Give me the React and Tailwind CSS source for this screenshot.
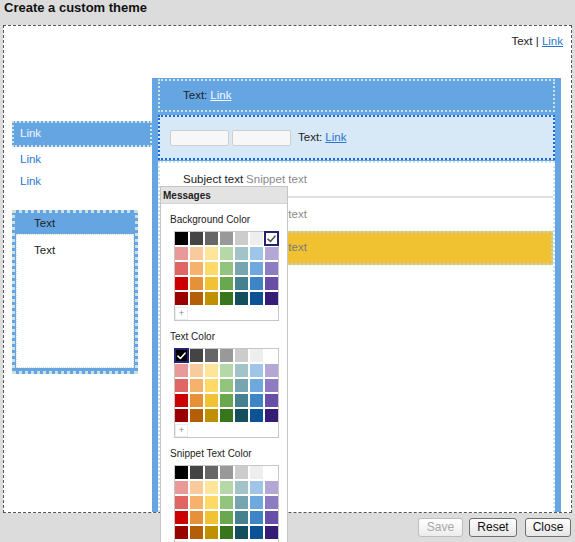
import React from "react";

const PALETTE = [
  ["#000000", "#444444", "#666666", "#999999", "#cccccc", "#eeeeee", "#ffffff"],
  ["#ea9999", "#f9cb9c", "#ffe599", "#b6d7a8", "#a2c4c9", "#9fc5e8", "#b4a7d6"],
  ["#e06666", "#f6b26b", "#ffd966", "#93c47d", "#76a5af", "#6fa8dc", "#8e7cc3"],
  ["#cc0000", "#e69138", "#f1c232", "#6aa84f", "#45818e", "#3d85c6", "#674ea7"],
  ["#990000", "#b45f06", "#bf9000", "#38761d", "#134f5c", "#0b5394", "#351c75"],
];

function Check({ light }) {
  return (
    <svg width="9" height="8" viewBox="0 0 9 8" className="block">
      <path
        d="M1 4.2 L3.4 6.5 L8 1.2"
        fill="none"
        stroke={light ? "#ffffff" : "#555555"}
        strokeWidth="1.6"
        strokeLinecap="round"
        strokeLinejoin="round"
      />
    </svg>
  );
}

function Swatches({ selected }) {
  return (
    <div className="ml-[4px] mt-[5px] w-[105px] border border-[#c6c6c6] bg-white">
      <div className="grid grid-cols-[repeat(7,13px)] gap-[2px]">
        {PALETTE.flat().map((c, i) => (
          <div key={i} className="relative h-[13px] w-[13px]" style={{ backgroundColor: c }}>
            {i === selected && (
              <div className="absolute -inset-[1px] flex items-center justify-center border-2 border-[#22226e]">
                <Check light={i === 0} />
              </div>
            )}
          </div>
        ))}
      </div>
      <div className="mt-[2px] flex h-[13px] w-[13px] items-center justify-center border border-[#ececec] text-[9px] leading-none text-[#888]">
        +
      </div>
    </div>
  );
}

function Section({ label, selected, first }) {
  return (
    <div className={first ? "" : "mt-[10px]"}>
      <div className="text-[10px] leading-[12px] text-[#222]">{label}</div>
      <Swatches selected={selected} />
    </div>
  );
}

export default function App() {
  return (
    <div className="relative h-[542px] w-[575px] overflow-hidden bg-[#dcdcdc] font-['Liberation_Sans',Arial,sans-serif] text-[#222]">
      <div className="h-[25px] pl-[4px] text-[13px] font-bold leading-[15px] text-[#111]">
        Create a custom theme
      </div>

      <div className="mx-[3px] flex h-[488px] flex-col overflow-hidden border border-dashed border-[#555] bg-white">
        <div className="pr-[8px] pt-[8px] text-right text-[11.5px] leading-[14px]">
          Text | <span className="text-[#2a76d2] underline">Link</span>
        </div>

        <div className="mt-[30px] flex min-h-0 flex-1 items-start">
          {/* left nav */}
          <div className="ml-[8px] mt-[43px] flex w-[140px] flex-col text-[11.5px]">
            <div className="flex h-[26px] items-center border-2 border-dotted border-[#d0e2e2] bg-[#65a6e2] pl-[6px] text-[#f2f6ff]">
              Link
            </div>
            <div className="mt-[1px] h-[22px] pl-[8px] leading-[22px] text-[#2a76d2]">Link</div>
            <div className="h-[22px] pl-[8px] leading-[22px] text-[#2a76d2]">Link</div>

            <div className="mt-[18px] flex h-[164px] w-[126px] flex-col border-[3px] border-dotted border-[#cfe0e0] bg-[#65a6e2]">
              <div className="h-[21px] pl-[19px] leading-[21px]">Text</div>
              <div className="mb-[3px] ml-[1px] mr-[1px] flex-1 border border-dotted border-[#cfe0e0] bg-white pl-[17px] pt-[8px] leading-[14px]">
                Text
              </div>
            </div>
          </div>

          {/* main column */}
          <div className="flex w-[409px] flex-col self-stretch bg-[#65a6e2] px-[6px] pt-[1px] text-[11.5px]">
            <div className="flex h-[33px] items-center border-2 border-dotted border-[#d0e2e2] pl-[23px]">
              <span>Text:</span>
              <span className="ml-[3px] text-[#f4f8ff] underline">Link</span>
            </div>

            <div className="mt-[3px] flex h-[45px] items-center border-2 border-dotted border-[#1c68d6] bg-[#d7e8f7] pl-[10px]">
              <div className="h-[16px] w-[59px] rounded-[2px] border border-[#cfcfcf] bg-[#f7f7f7]" />
              <div className="ml-[3px] h-[16px] w-[59px] rounded-[2px] border border-[#cfcfcf] bg-[#f7f7f7]" />
              <span className="ml-[7px]">Text:</span>
              <span className="ml-[3px] text-[#2a76d2] underline">Link</span>
            </div>

            <div className="mt-[1px] flex flex-1 flex-col border-x-2 border-t-2 border-dotted border-[#cfe0e0] bg-white">
              <div className="flex h-[35px] items-center border-b-2 border-solid border-[#e0e0e0] pl-[23px]">
                <span>Subject text</span>
                <span className="ml-[3px] text-[#8a8a8a]">Snippet text</span>
              </div>
              <div className="flex h-[33px] items-center pl-[23px]">
                <span>Subject text</span>
                <span className="ml-[3px] text-[#8a8a8a]">Snippet text</span>
              </div>
              <div className="flex h-[34px] items-center border-2 border-dotted border-[#b9d2dc] bg-[#f0c232] pl-[21px]">
                <span>Subject text</span>
                <span className="ml-[3px] text-[#7a7a7a]">Snippet text</span>
              </div>
            </div>
          </div>
        </div>
      </div>

      {/* bottom bar */}
      <div className="flex h-[29px] items-center justify-end pr-[4px] text-[12px]">
        <button className="h-[19px] w-[45px] rounded-[3px] border border-[#bdbdbd] bg-gradient-to-b from-white to-[#ececec] leading-[17px] text-[#a8a8a8]">
          Save
        </button>
        <button className="ml-[6px] h-[19px] w-[48px] rounded-[3px] border border-[#707070] bg-gradient-to-b from-white to-[#e6e6e6] leading-[17px] text-[#111]">
          Reset
        </button>
        <button className="ml-[8px] h-[19px] w-[46px] rounded-[3px] border border-[#707070] bg-gradient-to-b from-white to-[#e6e6e6] leading-[17px] text-[#111]">
          Close
        </button>
      </div>

      {/* Messages popup */}
      <div className="absolute left-[160px] top-[186px] h-[380px] w-[128px] border border-[#c4c4c4] bg-white">
        <div className="h-[17px] border-b border-[#d4d4d4] bg-[#e3e3e3] pl-[2px] text-[10px] font-bold leading-[17px] text-[#222]">
          Messages
        </div>
        <div className="pl-[9px] pt-[10px]">
          <Section label="Background Color" selected={6} first />
          <Section label="Text Color" selected={0} />
          <Section label="Snippet Text Color" selected={-1} />
        </div>
      </div>
    </div>
  );
}
